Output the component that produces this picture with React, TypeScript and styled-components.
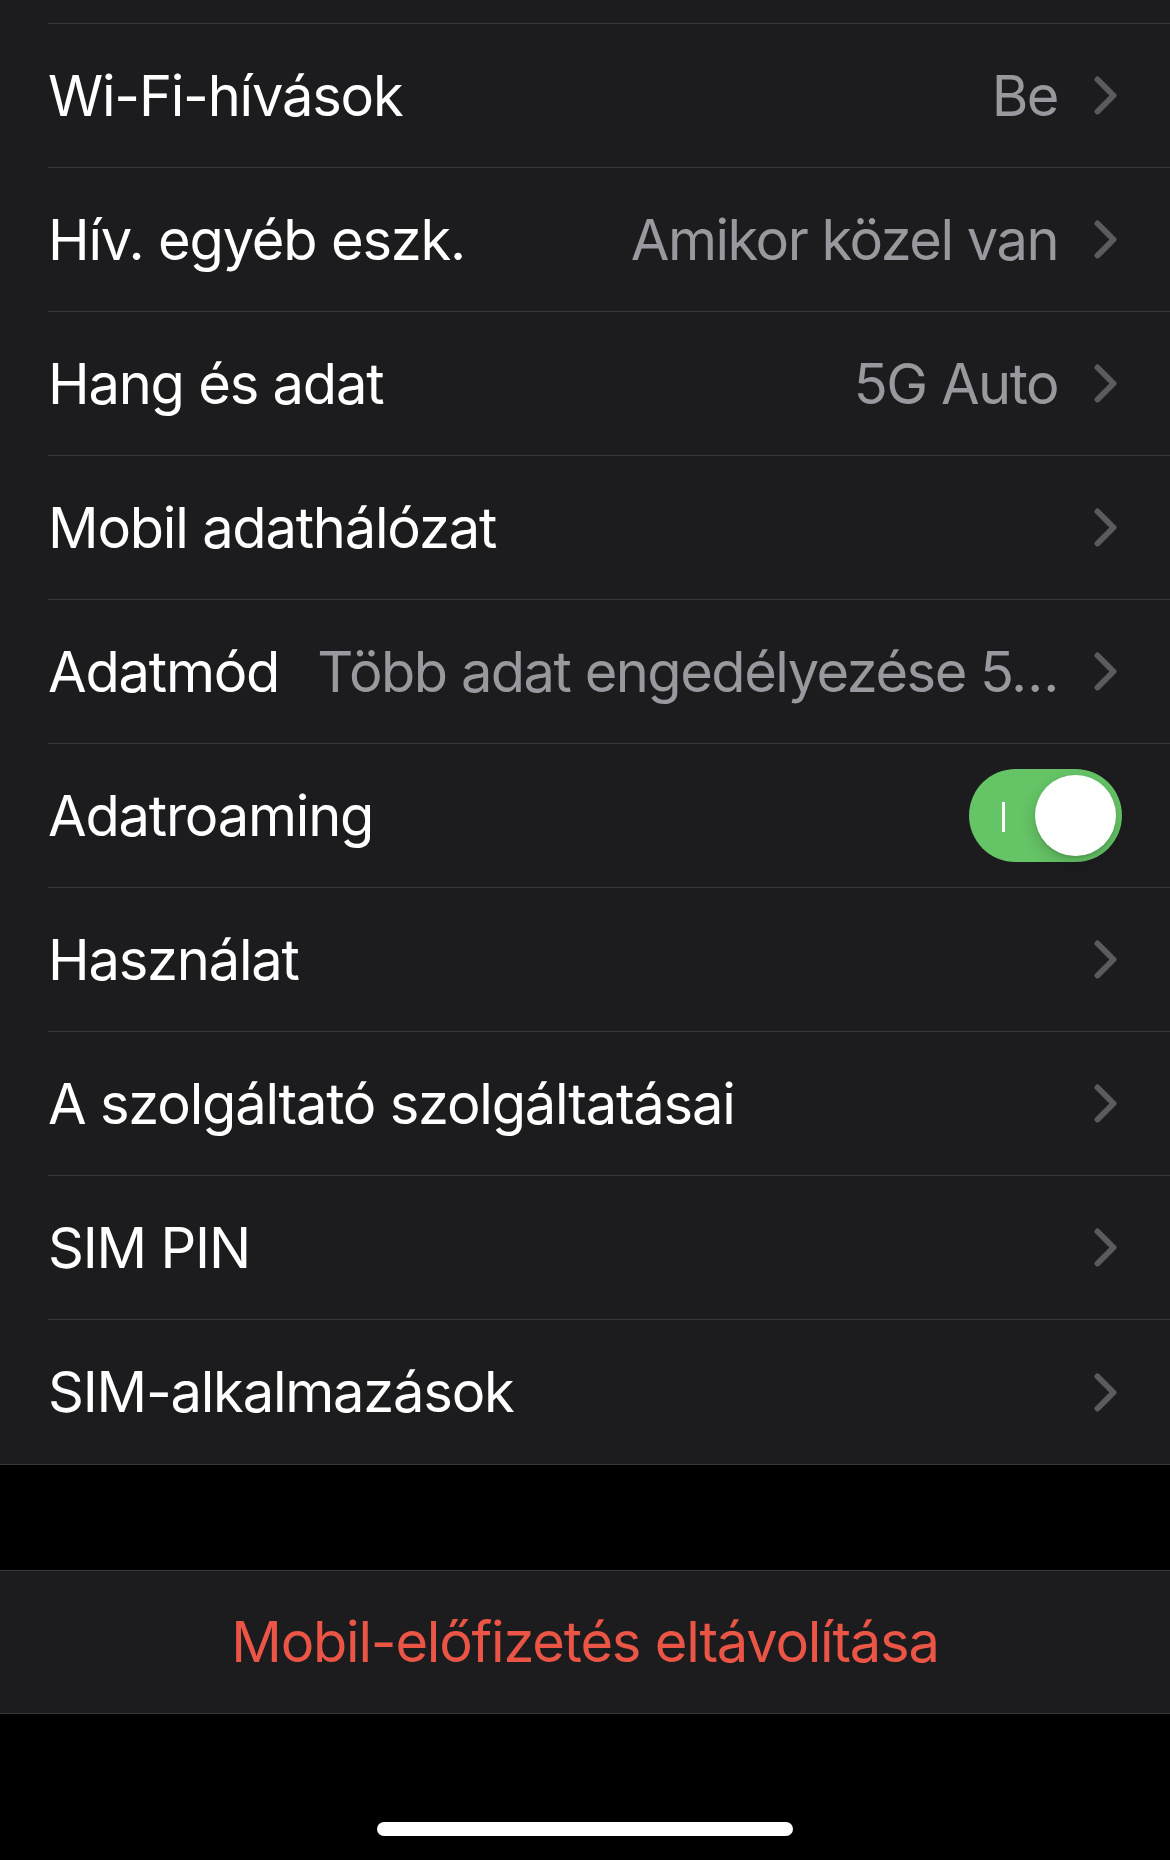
import React from 'react';
import styled, { createGlobalStyle } from 'styled-components';

const Colors = {
	BG: '#000000',
	CELL: '#1c1c1e',
	SEPARATOR: '#38383a',
	LABEL: '#ffffff',
	SECONDARY: '#98989f',
	TERTIARY: '#5a5a5f',
	GREEN: '#65c466',
	RED: '#eb5545',
};

const GlobalStyle = createGlobalStyle`
	html, body {
		margin: 0;
		padding: 0;
		background: ${Colors.BG};
	}
	body {
		font-family: Inter, "Noto Sans", "Liberation Sans", sans-serif;
		-webkit-font-smoothing: antialiased;
	}
`;

type Item = {
	label: string;
	value?: string;
	toggle?: boolean;
};

// the data-mode value is already shortened the way the device shows it
const items: Item[] = [
	{ label: 'Wi-Fi-hívások', value: 'Be' },
	{ label: 'Hív. egyéb eszk.', value: 'Amikor közel van' },
	{ label: 'Hang és adat', value: '5G Auto' },
	{ label: 'Mobil adathálózat' },
	{ label: 'Adatmód', value: 'Több adat engedélyezése 5…' },
	{ label: 'Adatroaming', toggle: true },
	{ label: 'Használat' },
	{ label: 'A szolgáltató szolgáltatásai' },
	{ label: 'SIM PIN' },
	{ label: 'SIM-alkalmazások' },
];

const ChevronIcon = () => (
	<Chevron width="23" height="39" viewBox="0 0 23 39">
		<path
			d="M3.5 3.5 L19.5 19.5 L3.5 35.5"
			fill="none"
			stroke={Colors.TERTIARY}
			strokeWidth="6"
			strokeLinecap="round"
			strokeLinejoin="round"
		/>
	</Chevron>
);

const Toggle = ({ on }: { on: boolean }) => (
	<Track $on={on}>
		<OnMark />
		<Knob />
	</Track>
);

export default function App() {
	return (
		<>
			<GlobalStyle />
			<Screen>
				<Group>
					<ClippedRow>
						<RowInner />
					</ClippedRow>
					{items.map((item) => (
						<Row key={item.label}>
							<RowInner>
								<Label>{item.label}</Label>
								{item.value && <Value>{item.value}</Value>}
								{item.toggle ? <Toggle on /> : <ChevronIcon />}
							</RowInner>
						</Row>
					))}
				</Group>
				<ButtonGroup>
					<DestructiveButton>Mobil-előfizetés eltávolítása</DestructiveButton>
				</ButtonGroup>
				<HomeIndicator />
			</Screen>
		</>
	);
}

const Screen = styled.div`
	width: 1170px;
	height: 1860px;
	overflow: hidden;
	display: flex;
	flex-direction: column;
	background: ${Colors.BG};
`;

const Group = styled.section`
	background: ${Colors.CELL};
	border-bottom: 1px solid ${Colors.SEPARATOR};
`;

const Row = styled.div`
	height: 144px;
	box-sizing: border-box;
	padding-left: 48px;
	display: flex;

	&:last-child > div {
		border-bottom: none;
	}
`;

const ClippedRow = styled(Row)`
	height: 24px;
`;

const RowInner = styled.div`
	flex: 1;
	min-width: 0;
	display: flex;
	align-items: center;
	padding-right: 48px;
	border-bottom: 1px solid ${Colors.SEPARATOR};
`;

const Label = styled.span`
	flex-shrink: 0;
	font-size: 56px;
	font-weight: 400;
	letter-spacing: -1.2px;
	color: ${Colors.LABEL};
	white-space: nowrap;
`;

const Value = styled.span`
	flex: 1;
	min-width: 0;
	margin-left: 36px;
	text-align: right;
	font-size: 56px;
	font-weight: 400;
	letter-spacing: -1.5px;
	color: ${Colors.SECONDARY};
	white-space: nowrap;
	overflow: hidden;
	text-overflow: ellipsis;
`;

const Chevron = styled.svg`
	flex-shrink: 0;
	margin-left: auto;
	margin-right: 5px;
	display: block;

	${Value} + & {
		margin-left: 36px;
	}
`;

const Track = styled.div<{ $on: boolean }>`
	margin-left: auto;
	width: 153px;
	height: 93px;
	box-sizing: border-box;
	border-radius: 47px;
	background: ${(p) => (p.$on ? Colors.GREEN : '#39393d')};
	display: flex;
	align-items: center;
	padding: 0 6px 0 33px;
`;

const OnMark = styled.span`
	width: 3px;
	height: 30px;
	background: #ffffff;
	margin-top: 3px;
`;

const Knob = styled.span`
	margin-left: auto;
	width: 81px;
	height: 81px;
	border-radius: 50%;
	background: #ffffff;
	box-shadow: 0 6px 16px rgba(0, 0, 0, 0.18), 0 2px 2px rgba(0, 0, 0, 0.08);
`;

const ButtonGroup = styled.section`
	margin-top: 105px;
	background: ${Colors.CELL};
	border-top: 1px solid ${Colors.SEPARATOR};
	border-bottom: 1px solid ${Colors.SEPARATOR};
`;

const DestructiveButton = styled.button`
	width: 100%;
	height: 142px;
	border: none;
	background: transparent;
	padding: 0;
	font-family: inherit;
	font-size: 56px;
	font-weight: 400;
	letter-spacing: -1.2px;
	color: ${Colors.RED};
	cursor: pointer;
`;

const HomeIndicator = styled.div`
	width: 416px;
	height: 14px;
	border-radius: 7px;
	background: #ffffff;
	margin: 108px auto 0;
`;
